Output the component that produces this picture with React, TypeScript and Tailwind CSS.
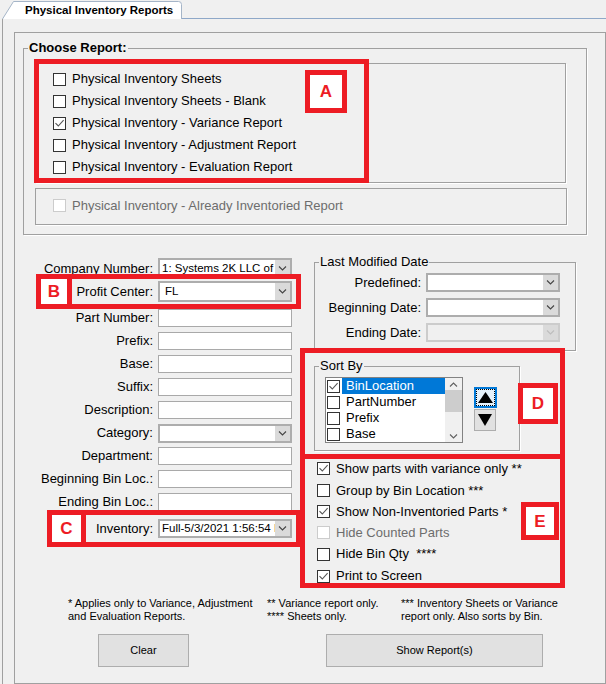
import React from 'react';

// WinForms "Physical Inventory Reports" tab with red annotation boxes

const Check = ({ checked = false, disabled = false }: { checked?: boolean; disabled?: boolean }) => (
  <span
    className={`flex h-[13px] w-[13px] shrink-0 items-center justify-center border bg-white ${
      disabled ? 'border-[#cccccc]' : 'border-[#333333]'
    }`}
  >
    {checked && (
      <svg width="11" height="11" viewBox="0 0 11 11">
        <path d="M1.5 5.2 L4.3 8 L9.6 2.2" fill="none" stroke="#555" strokeWidth="1.1" />
      </svg>
    )}
  </span>
);

const Chevron = ({ up = false, color = '#444' }: { up?: boolean; color?: string }) => (
  <svg width="9" height="5" viewBox="0 0 9 5">
    <path d={up ? 'M1 4.5 L4.5 1 L8 4.5' : 'M1 0.5 L4.5 4 L8 0.5'} fill="none" stroke={color} strokeWidth="1.1" />
  </svg>
);

interface ComboProps {
  value?: string;
  disabled?: boolean;
  size?: string;
  pad?: string;
}

const Combo = ({ value = '', disabled = false, size = 'w-[134px] h-[21px]', pad = 'pl-[2px]' }: ComboProps) => (
  <div
    className={`flex border-2 ${size} ${disabled ? 'border-[#cccccc] bg-[#f0f0f0]' : 'border-[#adadad] bg-white'}`}
  >
    <div className={`flex flex-1 items-center overflow-hidden whitespace-nowrap text-[11.5px] ${pad}`}>{value}</div>
    <div className="flex w-[15px] items-center justify-center bg-[#dadada]">
      <Chevron color={disabled ? '#bdbdbd' : '#444'} />
    </div>
  </div>
);

const TextBox = ({ size = 'h-[18px]' }: { size?: string }) => (
  <div className={`w-[134px] border border-[#a9a9a9] bg-white ${size}`} />
);

const Row = ({ label, cls, children }: { label: string; cls: string; children: React.ReactNode }) => (
  <div className={`flex items-center ${cls}`}>
    <span className="w-[138px] whitespace-nowrap text-right">{label}</span>
    <div className="ml-[5px]">{children}</div>
  </div>
);

const Group = ({ title, cls, children }: { title: string; cls: string; children?: React.ReactNode }) => (
  <div className={`relative border border-[#a0a0a0] shadow-[1px_1px_0_#ffffff] ${cls}`}>
    <span className="absolute left-[4px] top-[-9px] bg-[#f0f0f0] px-[1px] leading-[16px]">{title}</span>
    {children}
  </div>
);

const Mark = ({ letter, cls }: { letter: string; cls: string }) => (
  <div
    className={`absolute flex items-center justify-center border-[5px] border-[#ed1c24] bg-white text-[17px] font-bold leading-none text-[#ed1c24] ${cls}`}
  >
    {letter}
  </div>
);

const REPORTS = [
  { label: 'Physical Inventory Sheets', checked: false },
  { label: 'Physical Inventory Sheets - Blank', checked: false },
  { label: 'Physical Inventory - Variance Report', checked: true },
  { label: 'Physical Inventory - Adjustment Report', checked: false },
  { label: 'Physical Inventory - Evaluation Report', checked: false },
];

const TEXT_ROWS = [
  { label: 'Part Number:', cls: 'mt-[7px] h-[18px]' },
  { label: 'Prefix:', cls: 'mt-[5px] h-[18px]' },
  { label: 'Base:', cls: 'mt-[5px] h-[18px]' },
  { label: 'Suffix:', cls: 'mt-[5px] h-[18px]' },
  { label: 'Description:', cls: 'mt-[5px] h-[18px]' },
];

const LOWER_ROWS = [
  { label: 'Department:', cls: 'mt-[5px] h-[18px]' },
  { label: 'Beginning Bin Loc.:', cls: 'mt-[5px] h-[18px]' },
  { label: 'Ending Bin Loc.:', cls: 'mt-[5px] h-[18px]' },
];

const SORT_ITEMS = ['BinLocation', 'PartNumber', 'Prefix', 'Base'];

const OPTIONS = [
  { label: 'Show parts with variance only **', checked: true, h: 'h-[23px]' },
  { label: 'Group by Bin Location ***', checked: false, h: 'h-[21px]' },
  { label: 'Show Non-Inventoried Parts *', checked: true, h: 'h-[21px]' },
  { label: 'Hide Counted Parts', checked: false, h: 'h-[21px]', disabled: true },
  { label: 'Hide Bin Qty  ****', checked: false, h: 'h-[22px]' },
  { label: 'Print to Screen', checked: true, h: 'h-[22px]' },
];

export default function App() {
  return (
    <div className="relative h-[684px] w-[606px] overflow-hidden bg-[#f0f0f0] font-['Liberation_Sans',Arial,sans-serif] text-[13px] text-black">
      {/* tab strip */}
      <div className="flex h-[19px]">
        <div className="relative h-[19px] w-[182px]">
          <svg className="absolute left-0 top-0" width="182" height="19" viewBox="0 0 182 19">
            <path d="M2.5 19 L13.5 1.5 L178.5 1.5 Q181.5 1.5 181.5 4.5 L181.5 19" fill="#ffffff" stroke="#a5b5c8" />
          </svg>
          <span className="absolute left-[25px] top-[3px] text-[11.5px] font-bold leading-[14px]">
            Physical Inventory Reports
          </span>
        </div>
        <div className="flex-1 border-b border-[#8fa8c8]" />
      </div>

      {/* tab page */}
      <div className="ml-[2px] h-[665px] border-l border-[#a0a0a0] pl-[11px] pt-[13px]">
        <div className="h-[652px] w-[592px] border border-[#a0a0a0]">
          {/* Choose Report */}
          <Group title="Choose Report:" cls="ml-[8px] mt-[15px] h-[187px] w-[564px] [&>span]:font-bold">
            <div className="ml-[11px] mt-[14px] h-[120px] w-[531px] border border-[#a0a0a0] pl-[17px] pt-[4px] shadow-[1px_1px_0_#ffffff]">
              {REPORTS.map(r => (
                <div key={r.label} className="flex h-[22px] items-center gap-[6px]">
                  <Check checked={r.checked} />
                  <span>{r.label}</span>
                </div>
              ))}
            </div>
            <div className="ml-[11px] mt-[5px] flex h-[37px] w-[532px] items-center gap-[6px] border border-[#a0a0a0] pb-[2px] pl-[17px] text-[#6d6d6d] shadow-[1px_1px_0_#ffffff]">
              <Check disabled />
              <span>Physical Inventory - Already Inventoried Report</span>
            </div>
          </Group>

          {/* filters */}
          <div className="flex h-[362px]">
            <div className="w-[285px]">
              <Row label="Company Number:" cls="mt-[23px] h-[21px]">
                <Combo value="1: Systems 2K LLC of America" />
              </Row>
              <Row label="Profit Center:" cls="mt-[2px] h-[21px]">
                <Combo value="FL" pad="pl-[5px]" />
              </Row>
              {TEXT_ROWS.map(r => (
                <Row key={r.label} label={r.label} cls={r.cls}>
                  <TextBox />
                </Row>
              ))}
              <Row label="Category:" cls="mt-[5px] h-[18px]">
                <Combo size="w-[134px] h-[19px]" />
              </Row>
              {LOWER_ROWS.map(r => (
                <Row key={r.label} label={r.label} cls={r.cls}>
                  <TextBox />
                </Row>
              ))}
              <Row label="Inventory:" cls="mt-[8px] h-[19px]">
                <Combo value="Full-5/3/2021 1:56:54 PM" size="w-[134px] h-[19px]" />
              </Row>
            </div>

            <div className="flex-1">
              <Group title="Last Modified Date" cls="ml-[14px] mt-[27px] h-[89px] w-[262px]">
                {['Predefined:', 'Beginning Date:', 'Ending Date:'].map((l, i) => (
                  <div key={l} className={`flex h-[19px] items-center ${i === 0 ? 'mt-[10px]' : 'mt-[6px]'}`}>
                    <span className="w-[106px] text-right">{l}</span>
                    <div className="ml-[5px]">
                      <Combo size="w-[134px] h-[19px]" disabled={i === 2} />
                    </div>
                  </div>
                ))}
              </Group>

              <Group title="Sort By" cls="ml-[14px] mt-[15px] h-[85px] w-[206px]">
                <div className="flex">
                  <div className="ml-[10px] mt-[10px] flex h-[66px] w-[138px] border border-[#828282] bg-white">
                    <div className="flex-1">
                      {SORT_ITEMS.map((s, i) => (
                        <div key={s} className="flex h-[16px] items-center pl-[1px]">
                          <Check checked={i === 0} />
                          <span
                            className={`ml-[2px] flex h-full flex-1 items-center pl-[4px] ${
                              i === 0 ? 'bg-[#0078d7] text-white' : ''
                            }`}
                          >
                            {s}
                          </span>
                        </div>
                      ))}
                    </div>
                    <div className="flex w-[17px] flex-col bg-[#f0f0f0]">
                      <div className="flex h-[12px] items-center justify-center">
                        <Chevron up color="#606060" />
                      </div>
                      <div className="h-[22px] bg-[#cdcdcd]" />
                      <div className="flex-1" />
                      <div className="flex h-[12px] items-center justify-center">
                        <Chevron color="#606060" />
                      </div>
                    </div>
                  </div>
                  <div className="ml-[11px] mt-[20px] flex flex-col gap-[1px]">
                    <div className="h-[21px] w-[23px] border-2 border-[#0078d7] bg-[#e5f1fb]">
                      <div className="flex h-full w-full items-center justify-center border border-dotted border-black">
                        <svg width="15" height="11" viewBox="0 0 15 11">
                          <polygon points="0,11 7.5,0 15,11" fill="#000" />
                        </svg>
                      </div>
                    </div>
                    <div className="flex h-[22px] w-[22px] items-center justify-center border border-[#adadad] bg-[#e1e1e1]">
                      <svg width="14" height="12" viewBox="0 0 14 12">
                        <polygon points="0,0 14,0 7,12" fill="#000" />
                      </svg>
                    </div>
                  </div>
                </div>
              </Group>

              <div className="mt-[6px] pl-[17px]">
                {OPTIONS.map(o => (
                  <div
                    key={o.label}
                    className={`flex items-center gap-[6px] ${o.h} ${o.disabled ? 'text-[#6d6d6d]' : ''}`}
                  >
                    <Check checked={o.checked} disabled={o.disabled} />
                    <span className="whitespace-pre">{o.label}</span>
                  </div>
                ))}
              </div>
            </div>
          </div>

          {/* footnotes */}
          <div className="flex text-[11px] leading-[13px]">
            <div className="ml-[53px] w-[199px]">
              * Applies only to Variance, Adjustment
              <br />
              and Evaluation Reports.
            </div>
            <div className="w-[134px]">
              ** Variance report only.
              <br />
              **** Sheets only.
            </div>
            <div>
              *** Inventory Sheets or Variance
              <br />
              report only. Also sorts by Bin.
            </div>
          </div>

          <div className="mt-[11px] flex text-[11px]">
            <button className="ml-[83px] h-[33px] w-[91px] border border-[#adadad] bg-[#e1e1e1]">Clear</button>
            <button className="ml-[137px] h-[33px] w-[217px] border border-[#adadad] bg-[#e1e1e1]">
              Show Report(s)
            </button>
          </div>
        </div>
      </div>

      {/* annotation boxes */}
      <div className="absolute left-[34px] top-[59px] h-[124px] w-[335px] border-[5px] border-[#ed1c24]" />
      <Mark letter="A" cls="left-[305px] top-[70px] h-[43px] w-[42px]" />
      <div className="absolute left-[36px] top-[274px] h-[35px] w-[265px] border-[5px] border-[#ed1c24]" />
      <Mark letter="B" cls="left-[36px] top-[274px] h-[35px] w-[36px]" />
      <div className="absolute left-[47px] top-[510px] h-[37px] w-[254px] border-[5px] border-[#ed1c24]" />
      <Mark letter="C" cls="left-[47px] top-[510px] h-[37px] w-[39px]" />
      <div className="absolute left-[300px] top-[348px] h-[111px] w-[265px] border-[5px] border-[#ed1c24]" />
      <Mark letter="D" cls="left-[518px] top-[383px] h-[41px] w-[40px]" />
      <div className="absolute left-[300px] top-[454px] h-[134px] w-[265px] border-[5px] border-[#ed1c24]" />
      <Mark letter="E" cls="left-[521px] top-[502px] h-[38px] w-[38px]" />
    </div>
  );
}
